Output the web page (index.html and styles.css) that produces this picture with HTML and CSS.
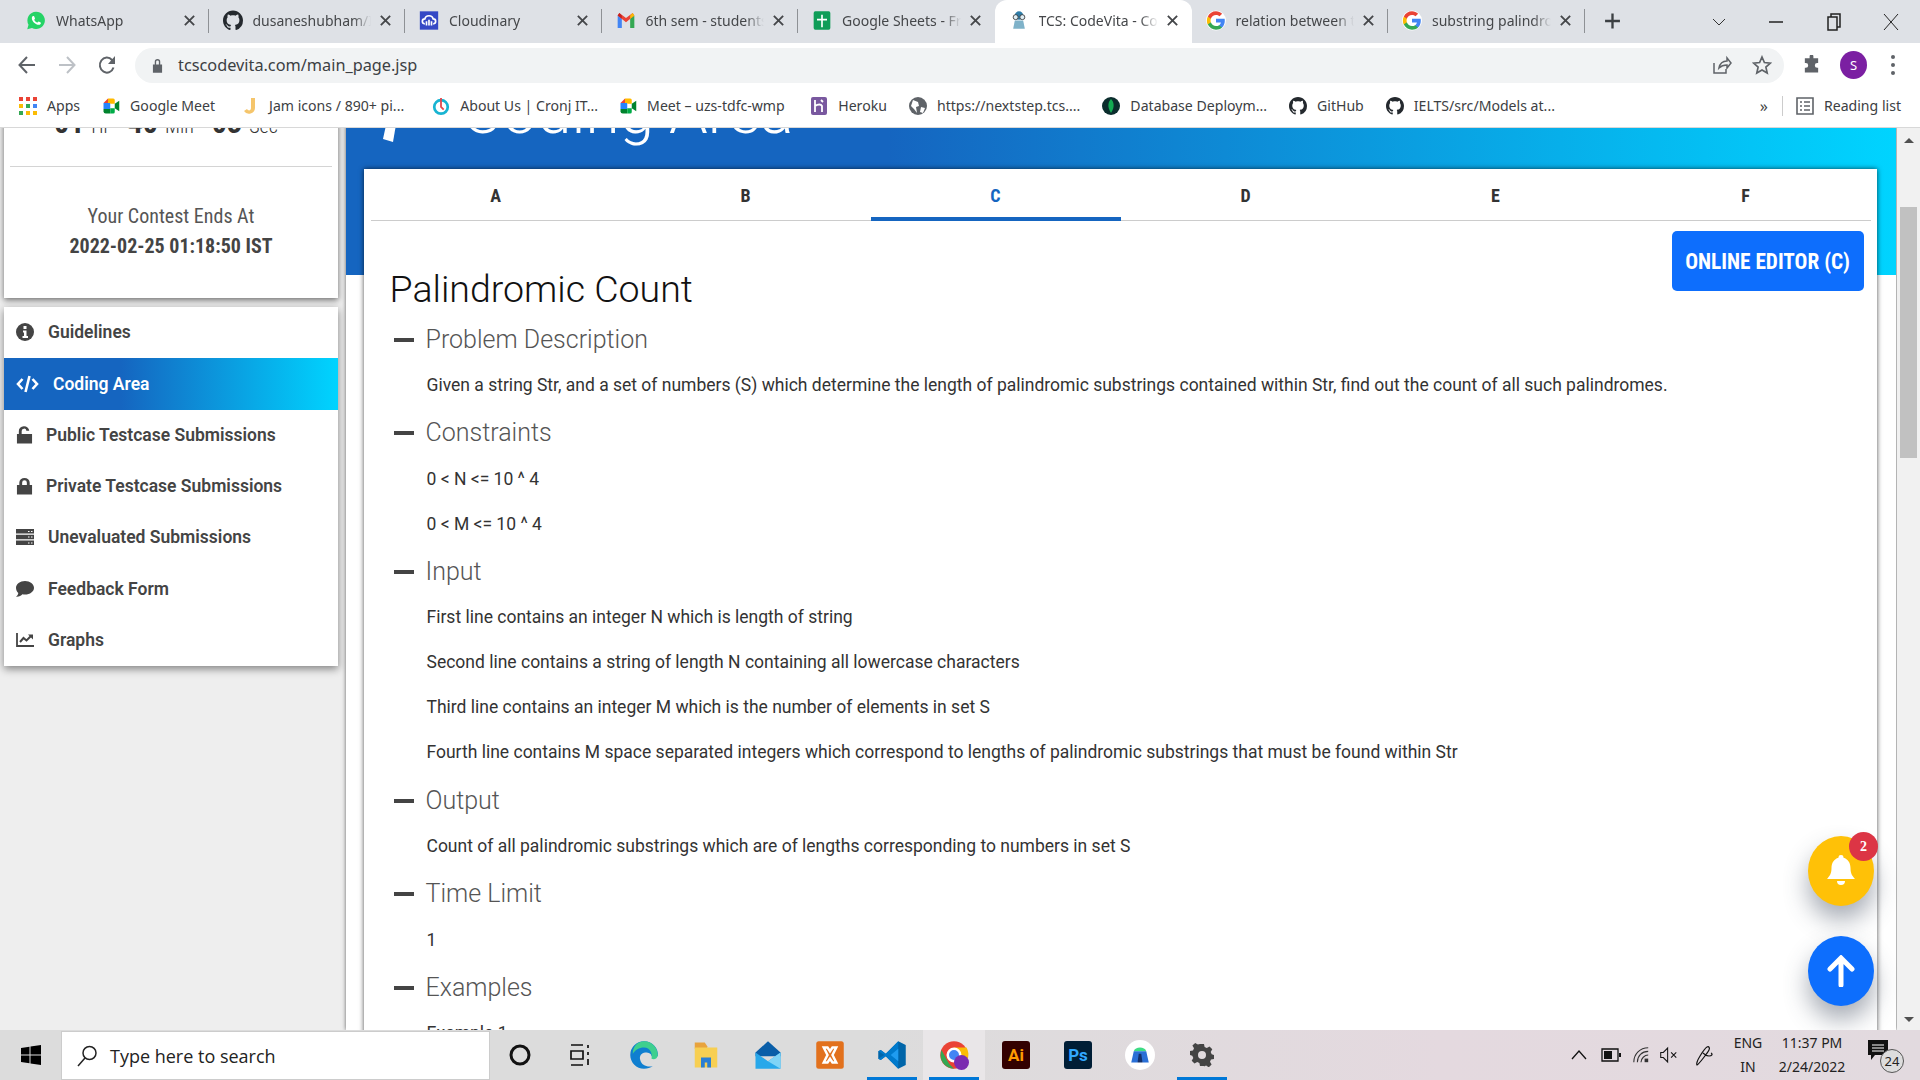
FILE: index.html
```html
<!DOCTYPE html>
<html lang="en">
<head>
<meta charset="utf-8">
<title>TCS: CodeVita - Coding Area</title>
<link rel="stylesheet" href="styles.css">
</head>
<body>
<svg class="defs" width="0" height="0">
  <symbol id="gh" viewBox="0 0 16 16"><path fill="#24292e" d="M8 0C3.58 0 0 3.58 0 8c0 3.54 2.29 6.53 5.47 7.59.4.07.55-.17.55-.38 0-.19-.01-.82-.01-1.49-2.01.37-2.53-.49-2.69-.94-.09-.23-.48-.94-.82-1.13-.28-.15-.68-.52-.01-.53.63-.01 1.08.58 1.23.82.72 1.21 1.87.87 2.33.66.07-.52.28-.87.51-1.07-1.78-.2-3.64-.89-3.64-3.95 0-.87.31-1.59.82-2.15-.08-.2-.36-1.02.08-2.12 0 0 .67-.21 2.2.82.64-.18 1.32-.27 2-.27.68 0 1.36.09 2 .27 1.53-1.04 2.2-.82 2.2-.82.44 1.1.16 1.92.08 2.12.51.56.82 1.27.82 2.15 0 3.07-1.87 3.75-3.65 3.95.29.25.54.73.54 1.48 0 1.07-.01 1.93-.01 2.2 0 .21.15.46.55.38A8.013 8.013 0 0016 8c0-4.42-3.58-8-8-8z"/></symbol>
  <symbol id="gg" viewBox="0 0 24 24"><circle cx="12" cy="12" r="12" fill="#fff"/><path fill="#4285F4" d="M22.56 12.25c0-.78-.07-1.53-.2-2.25H12v4.26h5.92c-.26 1.37-1.04 2.53-2.21 3.31v2.77h3.57c2.08-1.92 3.28-4.74 3.28-8.09z"/><path fill="#34A853" d="M12 23c2.97 0 5.46-.98 7.28-2.66l-3.57-2.77c-.98.66-2.23 1.06-3.71 1.06-2.86 0-5.29-1.93-6.16-4.53H2.18v2.84C3.99 20.53 7.7 23 12 23z"/><path fill="#FBBC05" d="M5.84 14.09c-.22-.66-.35-1.36-.35-2.09s.13-1.43.35-2.09V7.07H2.18C1.43 8.55 1 10.22 1 12s.43 3.45 1.18 4.93l2.85-2.22.81-.62z"/><path fill="#EA4335" d="M12 5.38c1.62 0 3.06.56 4.21 1.64l3.15-3.15C17.45 2.09 14.97 1 12 1 7.7 1 3.99 3.47 2.18 7.07l3.66 2.84c.87-2.6 3.3-4.53 6.16-4.53z"/></symbol>
  <symbol id="meet" viewBox="0 0 24 24"><path fill="#00832d" d="M2 16h9v6H5a3 3 0 0 1-3-3z"/><path fill="#2684fc" d="M2 8h9v8H2z"/><path fill="#ea4335" d="M8 2v6H2z"/><path fill="#ffba00" d="M8 2h7a2 2 0 0 1 2 2v5h-6V8H8z"/><path fill="#00ac47" d="M11 15h6v5a2 2 0 0 1-2 2h-4z"/><path fill="#00832d" d="M17 9l6-4v14l-6-4z"/></symbol>
  <symbol id="x" viewBox="0 0 14 14"><path d="M2 2l10 10M12 2L2 12" stroke="#45474a" stroke-width="2" fill="none"/></symbol>
</svg>

<div class="screen">
  <header class="tabstrip">
    <div class="tab sep">
      <svg class="fav" viewBox="0 0 24 24"><path fill="#25d366" d="M12 1.5A10.4 10.4 0 0 0 3 17l-1.5 5.5L7.200 21A10.400 10.400 0 1 0 12 1.500z"/><path fill="#fff" d="M8.500 6.500c-.5 0-1.500 1-1.500 2.700 0 3.600 4.600 8 8.300 8 1.500 0 2.600-1.200 2.600-2.200 0-.5-2.400-1.800-2.800-1.800-.4 0-1 1.300-1.500 1.300-1.300 0-3.700-2.400-3.700-3.500 0-.5.900-1 .9-1.500 0-.4-1-3-1.500-3z"/></svg>
      <span class="tab-title">WhatsApp</span><svg class="close"><use href="#x"/></svg>
    </div>
    <div class="tab sep">
      <svg class="fav"><use href="#gh"/></svg>
      <span class="tab-title">dusaneshubham/IELTS</span><svg class="close"><use href="#x"/></svg>
    </div>
    <div class="tab sep">
      <svg class="fav" viewBox="0 0 24 24"><rect width="22" height="22" x="1" y="1" fill="#3448c5"/><path fill="none" stroke="#fff" stroke-width="2" d="M7 16c-4 0-4-6 0-6 1-5 9-5 10 0 4 0 4 6 0 6M9 18v-5M12 18v-7M15 18v-5"/></svg>
      <span class="tab-title">Cloudinary</span><svg class="close"><use href="#x"/></svg>
    </div>
    <div class="tab sep">
      <svg class="fav" viewBox="0 0 24 24"><path fill="#4285f4" d="M2 6v15h5V10z"/><path fill="#34a853" d="M17 10v11h5V6z"/><path fill="#ea4335" d="M2 6l10 8 10-8-2-3-8 6-8-6z"/><path fill="#fbbc05" d="M20 3l2 3-5 4V6z"/><path fill="#c5221f" d="M4 3L2 6l5 4V6z"/></svg>
      <span class="tab-title">6th sem - students list</span><svg class="close"><use href="#x"/></svg>
    </div>
    <div class="tab">
      <svg class="fav" viewBox="0 0 24 24"><rect x="2" y="1" width="20" height="22" rx="2" fill="#0f9d58"/><path fill="#fff" d="M11 5h2v5h5v2h-5v8h-2v-8H6v-2h5z"/></svg>
      <span class="tab-title">Google Sheets - Free</span><svg class="close"><use href="#x"/></svg>
    </div>
    <div class="tab active">
      <svg class="fav" viewBox="0 0 24 24"><circle cx="12" cy="6" r="5" fill="#2f7da8"/><circle cx="8" cy="8" r="3" fill="#dfeef5" stroke="#333"/><circle cx="16" cy="8" r="3" fill="#dfeef5" stroke="#333"/><path fill="#7fb2c9" d="M7 12h10l2 10H5z"/></svg>
      <span class="tab-title">TCS: CodeVita - Coding</span><svg class="close"><use href="#x"/></svg>
    </div>
    <div class="tab sep">
      <svg class="fav"><use href="#gg"/></svg>
      <span class="tab-title">relation between tables</span><svg class="close"><use href="#x"/></svg>
    </div>
    <div class="tab sep">
      <svg class="fav"><use href="#gg"/></svg>
      <span class="tab-title">substring palindrome</span><svg class="close"><use href="#x"/></svg>
    </div>
    <svg class="newtab" viewBox="0 0 16 16"><path d="M8 1v14M1 8h14" stroke="#3c4043" stroke-width="2.200"/></svg>
    <div class="winctl">
      <svg class="w-chev" viewBox="0 0 14 8"><path d="M1 1l6 6 6-6" fill="none" stroke="#333"/></svg>
      <svg class="w-min" viewBox="0 0 14 2"><path d="M0 1h14" stroke="#222" stroke-width="1.500"/></svg>
      <svg class="w-max" viewBox="0 0 14 18"><path d="M1 4h9v13H1zM4 4V1h9v13h-3" fill="none" stroke="#222" stroke-width="1.500"/></svg>
      <svg class="w-x" viewBox="0 0 16 18"><path d="M1 1l14 16M15 1L1 17" stroke="#222" stroke-width="1"/></svg>
    </div>
  </header>

  <div class="toolbar">
    <svg class="nav-ico" viewBox="0 0 18 20"><path d="M17 10H2M9 2l-7.500 8L9 18" fill="none" stroke="#5f6368" stroke-width="2"/></svg>
    <svg class="nav-ico" viewBox="0 0 18 20"><path d="M1 10h15M9 2l7.500 8L9 18" fill="none" stroke="#bdc1c6" stroke-width="2"/></svg>
    <svg class="nav-ico" viewBox="0 0 18 20"><path d="M15.500 12.500A7 7.500 0 1 1 14 5l2 2" fill="none" stroke="#5f6368" stroke-width="2"/><path fill="#5f6368" d="M17 1v8h-7z"/></svg>
    <div class="omnibox">
      <svg class="lock" viewBox="0 0 12 16"><path fill="#5f6368" d="M1 7h10v9H1zM3 7V4a3 3 0 0 1 6 0v3H7.500V4a1.500 1.500 0 0 0-3 0v3z"/></svg>
      <span class="url">tcscodevita.com/main_page.jsp</span>
      <svg class="omni-ico share" viewBox="0 0 20 20"><path d="M2 8v10h12v-4M7 13c1-5 4-7 8-7V3l4 5-4 5V10c-3 0-6 1-8 3z" fill="none" stroke="#5f6368" stroke-width="1.500"/></svg>
      <svg class="omni-ico star" viewBox="0 0 20 20"><path d="M10 2l2.400 5.500 6 .6-4.500 4 1.300 5.900L10 15l-5.200 3 1.300-5.900-4.500-4 6-.6z" fill="none" stroke="#5f6368" stroke-width="1.700"/></svg>
    </div>
    <svg class="ext" viewBox="0 0 20 20"><path fill="#5f6368" d="M8 1a2 2 0 0 1 4 0v2h5v5h-1a2.500 2.500 0 0 0 0 5h1v5H3v-5h1a2.500 2.500 0 0 0 0-5H3V3h5z"/></svg>
    <span class="avatar">S</span>
    <span class="kebab"><i></i><i></i><i></i></span>
  </div>

  <nav class="bookmarks">
    <a class="bm bm-apps"><svg class="bm-ico" viewBox="0 0 18 18"><rect width="4" height="4" fill="#ea4335"/><rect x="7" width="4" height="4" fill="#ea4335"/><rect x="14" width="4" height="4" fill="#ea4335"/><rect y="7" width="4" height="4" fill="#fbbc05"/><rect x="7" y="7" width="4" height="4" fill="#34a853"/><rect x="14" y="7" width="4" height="4" fill="#4285f4"/><rect y="14" width="4" height="4" fill="#34a853"/><rect x="7" y="14" width="4" height="4" fill="#fbbc05"/><rect x="14" y="14" width="4" height="4" fill="#fbbc05"/></svg>Apps</a>
    <a class="bm bm-meet"><svg class="bm-ico"><use href="#meet"/></svg>Google Meet</a>
    <a class="bm bm-jam"><svg class="bm-ico" viewBox="0 0 18 18"><path d="M10 1h4v10a6 6 0 0 1-11 3l3-2c1 2 4 2 4-1z" fill="#f5c56b"/></svg>Jam icons / 890+ pi...</a>
    <a class="bm bm-about"><svg class="bm-ico" viewBox="0 0 20 20"><circle cx="10" cy="11" r="7.500" fill="none" stroke="#18b4d2" stroke-width="3"/><path d="M10 1v10l3 3" fill="none" stroke="#e5484d" stroke-width="2"/></svg>About Us | Cronj IT...</a>
    <a class="bm bm-uzs"><svg class="bm-ico"><use href="#meet"/></svg>Meet – uzs-tdfc-wmp</a>
    <a class="bm"><svg class="bm-ico" viewBox="0 0 18 18"><rect x="1" width="16" height="18" rx="2" fill="#79589f"/><path d="M5 3v12M5 9c3-2 6-2 7 0v6M11 3l2 2" fill="none" stroke="#fff" stroke-width="1.800"/></svg>Heroku</a>
    <a class="bm"><svg class="bm-ico" viewBox="0 0 18 18"><circle cx="9" cy="9" r="9" fill="#5f6368"/><path d="M4 3l5 2 1 4-3 1 1 6-3-4-3-3zM12 10l4 1-2 5-3-1z" fill="#fff"/></svg>https://nextstep.tcs....</a>
    <a class="bm"><svg class="bm-ico" viewBox="0 0 18 18"><circle cx="9" cy="9" r="9" fill="#0b2d2d"/><path d="M9 2c3 3 4 8 0 14-4-6-3-11 0-14z" fill="#13aa52"/></svg>Database Deploym...</a>
    <a class="bm"><svg class="bm-ico"><use href="#gh"/></svg>GitHub</a>
    <a class="bm"><svg class="bm-ico"><use href="#gh"/></svg>IELTS/src/Models at...</a>
    <span class="bm-more">»</span>
    <span class="bm-sep"></span>
    <a class="bm bm-read"><svg class="bm-ico" viewBox="0 0 18 18"><path d="M1 1h16v16H1z" fill="none" stroke="#5f6368" stroke-width="1.600"/><path d="M4 5h2M8 5h6M4 9h2M8 9h6M4 13h2M8 13h6" stroke="#5f6368" stroke-width="1.500"/></svg>Reading list</a>
  </nav>

  <main class="page">
    <aside class="sidebar">
      <section class="timer-card">
        <div class="timer"><b>01</b><span>Hr</span><b>40</b><span>Min</span><b>03</b><span>Sec</span></div>
        <div class="ends">
          <p class="ends-label">Your Contest Ends At</p>
          <p class="ends-date">2022-02-25 01:18:50 IST</p>
        </div>
      </section>
      <ul class="menu">
        <li class="item"><svg class="mi" viewBox="0 0 18 18"><circle cx="9" cy="9" r="9" fill="#444"/><path fill="#fff" d="M7.500 3h3v3h-3zM7 7.500h3.500V13H12v2H6.500v-2H8V9.500H7z"/></svg>Guidelines</li>
        <li class="item on"><svg class="mi mi-code" viewBox="0 0 22 18"><path d="M6 4L1.500 9 6 14M16 4l4.500 5-4.500 5" fill="none" stroke="#fff" stroke-width="2.600"/><path d="M13 1L9 17" stroke="#fff" stroke-width="2.600"/></svg>Coding Area</li>
        <li class="item tight"><svg class="mi" viewBox="0 0 18 18"><path fill="#444" d="M1 8h16v10H1zM3 8V5a5.500 5 0 0 1 11-.5h-3A2.500 2.500 0 0 0 6 5v3z"/></svg>Public Testcase Submissions</li>
        <li class="item tight"><svg class="mi" viewBox="0 0 18 18"><path fill="#444" d="M1 8h16v10H1zM3.500 8V5.500a5.500 5 0 0 1 11 0V8h-3V5.500a2.500 2.500 0 0 0-5 0V8z"/></svg>Private Testcase Submissions</li>
        <li class="item"><svg class="mi" viewBox="0 0 18 18"><path fill="#444" d="M0 1h18v4.500H0zM0 6.800h18v4.500H0zM0 12.600h18v4.500H0z"/><path fill="#fff" d="M12 3h1.500v1H12zM15 3h1.500v1H15zM12 8.500h1.500v1H12zM15 8.500h1.500v1H15zM12 14.500h1.500v1H12zM15 14.500h1.500v1H15z"/></svg>Unevaluated Submissions</li>
        <li class="item"><svg class="mi" viewBox="0 0 18 18"><path fill="#444" d="M9 1c5 0 9 3 9 6.800S14 14.600 9 14.600c-1 0-1.800-.1-2.600-.3C5 16 3 17 0 16.800c1.200-.8 2-2 2.300-3.700C.9 11.900 0 10 0 7.800 0 4 4 1 9 1z"/></svg>Feedback Form</li>
        <li class="item"><svg class="mi" viewBox="0 0 18 18"><path d="M1 2v13h17" fill="none" stroke="#444" stroke-width="1.800"/><path d="M4 11l3.500-4 3 2.500L15 5" fill="none" stroke="#444" stroke-width="2"/><path fill="#444" d="M12 3.500h5v5z"/></svg>Graphs</li>
      </ul>
    </aside>

    <section class="main">
      <div class="hero">
        <svg class="hero-ico" viewBox="0 0 20 60"><path fill="#fff" d="M12 0h8L10 58 0 55z"/></svg>
        <h1 class="hero-title">Coding Area</h1>
      </div>
      <div class="card">
        <div class="qtabs">
          <span class="qtab">A</span><span class="qtab">B</span><span class="qtab cur">C</span><span class="qtab">D</span><span class="qtab">E</span><span class="qtab">F</span>
        </div>
        <article class="problem">
          <a class="editor">ONLINE EDITOR (C)</a>
          <h2 class="ptitle">Palindromic Count</h2>
          <h3 class="sec"><i class="dash"></i>Problem Description</h3>
          <p class="txt">Given a string Str, and a set of numbers (S) which determine the length of palindromic substrings contained within Str, find out the count of all such palindromes.</p>
          <h3 class="sec"><i class="dash"></i>Constraints</h3>
          <p class="txt">0 &lt; N &lt;= 10 ^ 4</p>
          <p class="txt">0 &lt; M &lt;= 10 ^ 4</p>
          <h3 class="sec"><i class="dash"></i>Input</h3>
          <p class="txt">First line contains an integer N which is length of string</p>
          <p class="txt">Second line contains a string of length N containing all lowercase characters</p>
          <p class="txt">Third line contains an integer M which is the number of elements in set S</p>
          <p class="txt">Fourth line contains M space separated integers which correspond to lengths of palindromic substrings that must be found within Str</p>
          <h3 class="sec"><i class="dash"></i>Output</h3>
          <p class="txt">Count of all palindromic substrings which are of lengths corresponding to numbers in set S</p>
          <h3 class="sec"><i class="dash"></i>Time Limit</h3>
          <p class="txt">1</p>
          <h3 class="sec"><i class="dash"></i>Examples</h3>
          <p class="txt">Example 1</p>
        </article>
      </div>
    </section>

    <div class="scrollbar">
      <span class="sb-up"></span>
      <span class="sb-thumb"></span>
      <span class="sb-down"></span>
    </div>

    <button class="fab fab-bell" type="button">
      <svg class="fab-ico" viewBox="0 0 28 32"><path fill="#fff" d="M14 0a2.500 2.500 0 0 1 2.500 2.800C21 4 23.500 8 23.500 13c0 6 2 8 4.500 11H0c2.500-3 4.500-5 4.500-11 0-5 2.500-9 7-10.200A2.500 2.500 0 0 1 14 0zM10 26h8a4 4 0 0 1-8 0z"/></svg>
      <span class="badge">2</span>
    </button>
    <button class="fab fab-up" type="button">
      <svg class="fab-ico" viewBox="0 0 28 32"><path d="M14 30V4M3 14L14 3l11 11" fill="none" stroke="#fff" stroke-width="5" stroke-linecap="round"/></svg>
    </button>
  </main>

  <footer class="taskbar">
    <span class="start"><svg viewBox="0 0 20 20"><path fill="#000" d="M0 3l8.500-1.300V9.500H0zM9.500 1.500L20 0v9.500H9.500zM0 10.500h8.500v7.800L0 17zM9.500 10.500H20V20L9.500 18.500z"/></svg></span>
    <div class="search">
      <svg class="s-ico" viewBox="0 0 20 22"><circle cx="12.500" cy="8" r="6.500" fill="none" stroke="#222" stroke-width="1.500"/><path d="M8 13L1 21" stroke="#222" stroke-width="1.500"/></svg>
      <span>Type here to search</span>
    </div>
    <span class="slot wide"><svg class="t-ico" viewBox="0 0 24 24"><circle cx="12" cy="12" r="9" fill="none" stroke="#111" stroke-width="3"/></svg></span>
    <span class="slot wide gapr"><svg class="t-ico" viewBox="0 0 24 24"><path d="M3 2h12M3 22h12M3 8h12v8H3zM20 2v3M20 9v3M20 16v6" fill="none" stroke="#111" stroke-width="1.700"/></svg></span>
    <span class="slot"><svg class="t-ico big" viewBox="0 0 24 24"><path fill="#0f7fd0" d="M12 1a11 11 0 0 0-11 11c0 6 5 11 11 11 3 0 5-1 7-2-5 1-9-1-10-5-1-3 1-6 4-6 3 0 5 1 5 3h5c1-6-4-12-11-12z"/><path fill="#3ecf8e" d="M12 1c6 0 11 5 11 11 0 3-3 4-5 3 1-4-1-9-6-9-4 0-7 2-9 5 0-6 4-10 9-10z"/></svg></span>
    <span class="slot"><svg class="t-ico big" viewBox="0 0 24 24"><path fill="#e8a33d" d="M3 2h8l2 3v2H3z"/><path fill="#f7cf52" d="M3 6h18v16H3z"/><path fill="#2a7fd4" d="M8 22v-8h8v8h-3v-4h-2v4z"/></svg></span>
    <span class="slot"><svg class="t-ico big" viewBox="0 0 24 24"><path fill="#0a5ea8" d="M12 1l10 9v3H2v-3z"/><path fill="#28a8ea" d="M2 10l10 7 10-7v13H2z"/><path fill="#7fd4f7" d="M12 17l10-7v13z"/></svg></span>
    <span class="slot"><svg class="t-ico big" viewBox="0 0 24 24"><rect x="1" y="1" width="22" height="22" rx="2" fill="#e2711d"/><path d="M7 6h3l2 3 2-3h3l-3 6 3 6h-3l-2-3-2 3H7l3-6z" fill="none" stroke="#fff" stroke-width="2"/></svg></span>
    <span class="slot run"><svg class="t-ico big" viewBox="0 0 24 24"><path fill="#0065a9" d="M17 1l6 3v16l-6 3-10-10-4 3-2-1V9l2-1 4 3z"/><path fill="#007acc" d="M17 1L7 11l-4-3-2 1 5 3-5 3 2 1 4-3 10 10z"/><path fill="#1f9cf0" d="M17 7v10l-6-5z"/></svg></span>
    <span class="slot run lit"><svg class="t-ico big" viewBox="0 0 24 24"><circle cx="12" cy="12" r="11" fill="#ea4335"/><path fill="#34a853" d="M2 8l6 11 4 4a11 11 0 0 1-10-15z"/><path fill="#fbbc05" d="M12 6h10a11 11 0 0 1-6 16z"/><circle cx="12" cy="12" r="5" fill="#4285f4" stroke="#fff" stroke-width="2"/><circle cx="18" cy="18" r="6" fill="#7b2cb0"/></svg></span>
    <span class="slot"><span class="app-ai">Ai</span></span>
    <span class="slot"><span class="app-ps">Ps</span></span>
    <span class="slot"><svg class="t-ico big" viewBox="0 0 24 24"><circle cx="12" cy="12" r="12" fill="#fff"/><path fill="#3ddc84" d="M7 9c1-4 9-4 10 0z"/><path fill="#2a6fd6" d="M7 9h10l2 9h-5l-2-5-2 5H5z"/><path fill="#14306b" d="M11 11h2l1 7h-4z"/></svg></span>
    <span class="slot run"><svg class="t-ico" viewBox="0 0 24 24"><path fill="#444" fill-rule="evenodd" d="M10 1h4l.6 3 2.200 1 2.700-1.600 2.800 2.800L20.700 9l1 2.200 2.300.8v4l-3 .6-1 2.200 1.600 2.700-2.800 2.800-2.700-1.700-2.200 1L14 23h-4l-.6-3-2.200-1-2.700 1.600-2.800-2.800L3.300 15l-1-2.200L0 12V8l3-.6 1-2.200L2.400 2.500 5.200 0l2.700 1.600L10 1zm2 7a4 4 0 1 0 0 8 4 4 0 0 0 0-8z"/></svg></span>
    <div class="tray">
      <svg class="tr tr-up" viewBox="0 0 16 10"><path d="M1 9l7-8 7 8" fill="none" stroke="#111" stroke-width="1.300"/></svg>
      <svg class="tr tr-bat" viewBox="0 0 20 14"><path d="M1 1h16v12H1z" fill="none" stroke="#111" stroke-width="1.300"/><path d="M3 3h8v8H3zM18 5h2v4h-2z" fill="#111"/></svg>
      <svg class="tr tr-wifi" viewBox="0 0 20 20"><path d="M2 18C2 9 9 2 18 2M6 18c0-7 5-12 12-12M10 18c0-4 4-8 8-8" fill="none" stroke="#333" stroke-width="1.200"/><path d="M14 14h4v4h-4z" fill="#333"/></svg>
      <svg class="tr tr-mute" viewBox="0 0 22 20"><path d="M2 7h3l5-5v16l-5-5H2zM14 7l6 6M20 7l-6 6" fill="none" stroke="#111" stroke-width="1.200"/></svg>
      <svg class="tr tr-pen" viewBox="0 0 20 22"><path d="M3 21c-2-3 8-17 10-18 2-1 3 1 2 3-1 2-9 13-12 15zM9 9c3 2 3 3 6 3 3 0 4-2 2-3" fill="none" stroke="#111" stroke-width="1.200"/></svg>
      <div class="lang"><span>ENG</span><span>IN</span></div>
      <div class="clock"><span>11:37 PM</span><span>2/24/2022</span></div>
      <div class="notif">
        <svg class="n-ico" viewBox="0 0 20 20"><path fill="#111" d="M0 0h20v15H7l-4 5v-5H0z"/><path d="M4 5h12M4 8h12M4 11h12" stroke="#fff" stroke-width="1.200"/></svg>
        <span class="n-count">24</span>
      </div>
    </div>
  </footer>
</div>
</body>
</html>
```

FILE: styles.css
```css
* { box-sizing: border-box; }
html, body { margin: 0; padding: 0; height: 100%; overflow: hidden; }
body { font-family: Roboto, "Liberation Sans", sans-serif; }
.defs { position: absolute; }
.screen { width: 1920px; height: 1080px; display: flex; flex-direction: column; overflow: hidden; }

/* browser tab strip */
.tabstrip { height: 43px; flex: none; background: #dee1e6; display: flex; align-items: stretch; padding-left: 12px; font-family: "Noto Sans", sans-serif; }
.tab { width: 196.5px; display: flex; align-items: center; padding: 0 13px 2px 14px; position: relative; color: #45474a; font-size: 14px; }
.tab.sep::after { content: ""; position: absolute; right: 0; top: 9px; height: 24px; width: 1px; background: #8e9195; }
.tab.active { background: #fff; border-radius: 12px 12px 0 0; width: 197px; }
.fav { width: 20px; height: 21px; flex: none; }
.tab-title { flex: 1; margin-left: 10px; white-space: nowrap; overflow: hidden; -webkit-mask-image: linear-gradient(90deg, #000 85%, transparent); mask-image: linear-gradient(90deg, #000 85%, transparent); }
.close { width: 13px; height: 13px; flex: none; margin-left: 8px; }
.newtab { width: 17px; height: 18px; margin: 12px 0 0 19px; }
.winctl { margin-left: auto; display: flex; align-items: center; }
.w-chev { width: 14px; height: 8px; margin-right: 43px; }
.w-min { width: 14px; height: 2px; margin-right: 44px; }
.w-max { width: 14px; height: 18px; margin-right: 42px; }
.w-x { width: 16px; height: 18px; margin-right: 21px; }

/* toolbar */
.toolbar { height: 43px; flex: none; background: #fff; display: flex; align-items: center; padding: 1px 0 0 18px; }
.nav-ico { width: 18px; height: 20px; margin-right: 22px; flex: none; }
.omnibox { width: 1649px; margin-left: -3px; height: 35px; border-radius: 18px; background: #f1f3f4; display: flex; align-items: center; padding-left: 17px; }
.lock { width: 11px; height: 15px; }
.url { margin-left: 15px; font: 16.3px "Noto Sans", sans-serif; color: #3c4043; }
.omni-ico { width: 20px; height: 20px; flex: none; }
.share { margin-left: auto; }
.star { margin: 0 12px 0 20px; }
.ext { width: 19px; height: 20px; margin-left: 18px; flex: none; }
.avatar { width: 27px; height: 28px; border-radius: 50%; background: #7b1fa2; color: #fff; font: 13px "Noto Sans", sans-serif; display: flex; align-items: center; justify-content: center; margin-left: 19px; flex: none; }
.kebab { display: flex; flex-direction: column; gap: 4px; margin-left: 24px; }
.kebab i { width: 4px; height: 4px; border-radius: 50%; background: #5f6368; display: block; }

/* bookmarks */
.bookmarks { height: 42px; flex: none; background: #fff; display: flex; align-items: center; padding: 0 0 2px 19px; font: 14.1px "Noto Sans", sans-serif; color: #3c4043; border-bottom: 1px solid #d8d8d8; white-space: nowrap; }
.bm { display: flex; align-items: center; gap: 10px; margin-right: 22px; }
.bm-meet { margin-right: 26px; }
.bm-jam { margin-right: 28px; }
.bm-about { margin-right: 21px; }
.bm-uzs { margin-right: 25.5px; }
.bm-ico { width: 18px; height: 18px; flex: none; }
.bm-more { margin-left: auto; margin-right: 14px; color: #444; font-size: 16px; }
.bm-sep { width: 1px; height: 20px; background: #ccc; margin-right: 13px; }
.bm-read { margin-right: 19px; }

/* page */
.page { flex: 1; min-height: 0; display: flex; overflow: hidden; background: #eee; position: relative; }
.sidebar { width: 346px; flex: none; padding-left: 4px; margin-top: -60px; }
.timer-card { width: 334px; height: 230px; background: #fff; box-shadow: 0 2px 6px rgba(0,0,0,.55); padding: 0 6px; }
.timer { height: 99px; padding: 36px 0 0 44px; display: flex; align-items: baseline; color: #333; border-bottom: 1px solid #d4d4d4; font-stretch: 75%; }
.timer b { font-size: 30px; font-weight: 700; line-height: 38px; }
.timer span { font-size: 20px; font-weight: 300; margin: 0 18px 0 7px; }
.ends { text-align: center; padding-top: 34px; font-stretch: 75%; }
.ends p { margin: 0; font-size: 20px; line-height: 30px; color: #555; }
.ends .ends-date { font-weight: 700; color: #444; }
.menu { list-style: none; margin: 9px 0 0; padding: 0; width: 334px; background: #fff; box-shadow: 0 3px 8px rgba(0,0,0,.45); }
.item { height: 51.3px; display: flex; align-items: center; padding: 0 0 1px 12px; font-size: 17.5px; font-weight: 600; color: #444; }
.mi { width: 18px; height: 18px; margin-right: 14px; flex: none; }
.item.tight .mi { width: 17px; margin-right: 13px; }
.item.on { background: linear-gradient(90deg, #1565c0 35%, #00d4ff 100%); color: #fff; padding-bottom: 0; }
.mi-code { width: 23px; margin-right: 14px; }

.main { width: 1550px; flex: none; margin-top: -60px; background: #fff; box-shadow: 0 0 4px rgba(0,0,0,.6); }
.hero { height: 207px; background: linear-gradient(90deg, #1565c0 35%, #00d4ff 100%); padding: 0 0 0 37px; display: flex; align-items: flex-start; color: #fff; }
.hero-ico { width: 20px; height: 60px; margin-top: 16px; flex: none; }
.hero-title { margin: 0 0 0 59px; font-size: 62px; font-weight: 300; line-height: 80px; padding-top: 4px; white-space: nowrap; }
.card { margin: -106px 19px 0 18px; height: 1000px; background: #fff; box-shadow: 0 0 5px rgba(0,0,0,.7); padding: 0 6.5px; position: relative; }
.qtabs { display: grid; grid-template-columns: repeat(6, 250px); height: 52px; border-bottom: 1px solid #ccc; }
.qtab { display: flex; align-items: center; justify-content: center; font-size: 18px; font-weight: 700; color: #333; font-stretch: 75%; height: 52px; }
.qtab.cur { color: #1565c0; border-bottom: 4px solid #1565c0; padding-top: 4px; }
.problem { padding: 0 0 0 19px; }
.editor { float: right; margin: 10px 7px 0 0; width: 192px; height: 60px; border-radius: 5px; background: #0d6efd; color: #fff; font-weight: 700; font-size: 21.3px; font-stretch: 75%; display: flex; align-items: center; justify-content: center; }
.ptitle { margin: 0; padding-top: 43.5px; font-size: 37.5px; line-height: 48px; font-weight: 300; color: #111; }
.sec { margin: 19.1px 0 17.5px; font-size: 25px; line-height: 30px; font-weight: 300; color: #555; display: flex; align-items: center; }
.ptitle + .sec { margin-top: 12.3px; }
.dash { width: 20px; height: 4px; background: #444; margin: 0 12px 0 4px; flex: none; }
.txt { margin: 0 0 18px 37px; font-size: 17.5px; line-height: 27px; color: #333; }

.scrollbar { width: 23px; margin-left: 1px; flex: none; background: #f1f1f1; display: flex; flex-direction: column; align-items: center; position: relative; }
.sb-up { width: 0; height: 0; border: 5px solid transparent; border-top: 0; border-bottom: 5px solid #505050; margin-top: 10px; }
.sb-thumb { width: 17px; height: 251px; background: #c1c1c1; margin-top: 64px; }
.sb-down { width: 0; height: 0; border: 5px solid transparent; border-bottom: 0; border-top: 5px solid #505050; margin-top: auto; margin-bottom: 8px; }

.fab { position: absolute; left: 1808px; width: 66px; height: 70px; border: 0; border-radius: 50%; display: flex; align-items: center; justify-content: center; box-shadow: 0 14px 24px rgba(60,70,90,.45); padding: 0; }
.fab-bell { top: 708px; background: #ffc107; }
.fab-up { top: 808px; background: #0d6efd; }
.fab-ico { width: 28px; height: 32px; }
.badge { position: absolute; right: -4px; top: -4px; width: 29px; height: 29px; border-radius: 50%; background: #dc3545; color: #fff; font: 700 14px "Liberation Serif", serif; display: flex; align-items: center; justify-content: center; }

/* taskbar */
.taskbar { height: 50px; flex: none; display: flex; align-items: stretch; background: linear-gradient(90deg, #dcdcdc 0%, #dcdcdc 45%, #e4d9df 75%, #e2dadf 100%); }
.start { width: 61px; display: flex; align-items: center; justify-content: center; }
.start svg { width: 20px; height: 20px; }
.search { width: 429px; margin-top: 1px; background: #fff; display: flex; align-items: center; padding-left: 15px; font: 18px "Open Sans", sans-serif; color: #222; border: 1px solid #ccc; }
.s-ico { width: 20px; height: 22px; margin-right: 13px; }
.slot { width: 62px; display: flex; align-items: center; justify-content: center; position: relative; }
.slot.wide { width: 60px; }
.slot.gapr { margin-right: 3px; }
.t-ico { width: 24px; height: 24px; }
.t-ico.big { width: 30px; height: 30px; }
.slot.run::after { content: ""; position: absolute; left: 6px; right: 6px; bottom: 0; height: 3px; background: #0078d7; }
.slot.lit { background: #e9e6e8; }
.app-ai, .app-ps { width: 28px; height: 28px; border-radius: 3px; display: flex; align-items: center; justify-content: center; font-size: 17px; font-weight: 700; }
.app-ai { background: #330000; color: #ff9a00; }
.app-ps { background: #001e36; color: #31a8ff; }
.tray { margin-left: auto; display: flex; align-items: center; font: 14px "Noto Sans", sans-serif; color: #222; }
.tr { flex: none; }
.tr-up { width: 16px; height: 10px; margin-right: 14px; }
.tr-bat { width: 20px; height: 14px; margin-right: 11px; }
.tr-wifi { width: 18px; height: 18px; margin-right: 9px; }
.tr-mute { width: 19px; height: 18px; margin-right: 16px; }
.tr-pen { width: 20px; height: 22px; margin-right: 18px; }
.lang, .clock { display: flex; flex-direction: column; align-items: center; line-height: 24px; white-space: nowrap; }
.lang { width: 32px; margin-right: 12px; }
.clock { width: 72px; margin-right: 20px; }
.notif { width: 36px; height: 40px; position: relative; margin-right: 16px; }
.n-ico { width: 20px; height: 20px; position: absolute; left: 0; top: 5px; }
.n-count { position: absolute; right: 0; bottom: 2px; width: 24px; height: 24px; border-radius: 50%; background: #ddd; border: 1px solid #555; font-size: 13px; display: flex; align-items: center; justify-content: center; }
```
